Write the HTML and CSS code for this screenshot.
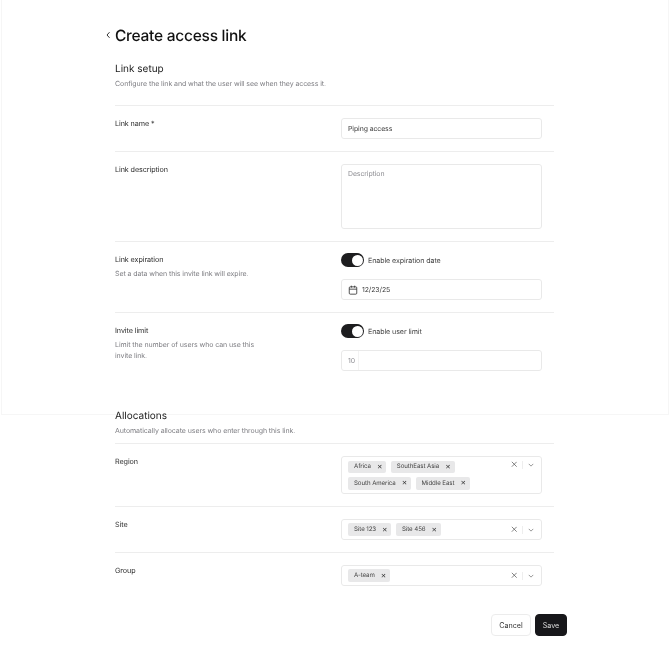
FILE: index.html
```html
<!DOCTYPE html>
<html lang="en">
<head>
<meta charset="utf-8">
<title>Create access link</title>
<link rel="stylesheet" href="styles.css">
</head>
<body>
<div class="frame"></div>
<main class="page">
  <header class="title-row">
    <svg class="back" viewBox="0 0 6 8" width="6" height="8"><path d="M4.5 1.2 2 4l2.5 2.8" fill="none" stroke="#333" stroke-width="1"/></svg>
    <h1>Create access link</h1>
  </header>

  <section class="setup">
    <h2>Link setup</h2>
    <p class="hint">Configure the link and what the user will see when they access it.</p>
    <div class="row">
      <div class="label">Link name *</div>
      <div class="control"><div class="input">Piping access</div></div>
    </div>
    <div class="row">
      <div class="label">Link description</div>
      <div class="control"><div class="input area muted">Description</div></div>
    </div>
    <div class="row">
      <div class="label">Link expiration<p class="hint narrow">Set a data when this invite link will expire.</p></div>
      <div class="control stack">
        <div class="switch-line"><span class="switch"></span><span>Enable expiration date</span></div>
        <div class="input date">
          <svg viewBox="0 0 12 12" width="10" height="10"><rect x="1.5" y="2.2" width="9" height="8.8" rx="1.2" fill="none" stroke="#333"/><path d="M1.5 5h9M4 .8v2.4M8 .8v2.4" fill="none" stroke="#333"/></svg>
          <span>12/23/25</span>
        </div>
      </div>
    </div>
    <div class="row last">
      <div class="label">Invite limit<p class="hint narrow">Limit the number of users who can use this invite link.</p></div>
      <div class="control stack">
        <div class="switch-line"><span class="switch"></span><span>Enable user limit</span></div>
        <div class="input number"><span class="muted num">10</span></div>
      </div>
    </div>
  </section>

  <section class="alloc">
    <h2>Allocations</h2>
    <p class="hint">Automatically allocate users who enter through this link.</p>
    <div class="row">
      <div class="label">Region</div>
      <div class="control">
        <div class="select tall">
          <div class="tags">
            <span class="tag">Africa<i>&#10005;</i></span><span class="tag">SouthEast Asia<i>&#10005;</i></span>
            <span class="tag">South America<i>&#10005;</i></span><span class="tag">Middle East<i>&#10005;</i></span>
          </div>
          <div class="actions">
            <svg class="clear" viewBox="0 0 8 8" width="7" height="7"><path d="M1 1l6 6M7 1 1 7" stroke="#555" fill="none" stroke-width=".9"/></svg>
            <span class="sep"></span>
            <svg class="chev" viewBox="0 0 8 5" width="6" height="4"><path d="M1 1l3 3 3-3" stroke="#666" fill="none" stroke-width=".9"/></svg>
          </div>
        </div>
      </div>
    </div>
    <div class="row">
      <div class="label">Site</div>
      <div class="control">
        <div class="select">
          <div class="tags">
            <span class="tag">Site 123<i>&#10005;</i></span><span class="tag">Site 456<i>&#10005;</i></span>
          </div>
          <div class="actions">
            <svg class="clear" viewBox="0 0 8 8" width="7" height="7"><path d="M1 1l6 6M7 1 1 7" stroke="#555" fill="none" stroke-width=".9"/></svg>
            <span class="sep"></span>
            <svg class="chev" viewBox="0 0 8 5" width="6" height="4"><path d="M1 1l3 3 3-3" stroke="#666" fill="none" stroke-width=".9"/></svg>
          </div>
        </div>
      </div>
    </div>
    <div class="row">
      <div class="label">Group</div>
      <div class="control">
        <div class="select">
          <div class="tags">
            <span class="tag">A-team<i>&#10005;</i></span>
          </div>
          <div class="actions">
            <svg class="clear" viewBox="0 0 8 8" width="7" height="7"><path d="M1 1l6 6M7 1 1 7" stroke="#555" fill="none" stroke-width=".9"/></svg>
            <span class="sep"></span>
            <svg class="chev" viewBox="0 0 8 5" width="6" height="4"><path d="M1 1l3 3 3-3" stroke="#666" fill="none" stroke-width=".9"/></svg>
          </div>
        </div>
      </div>
    </div>
  </section>

  <footer class="buttons">
    <button class="btn">Cancel</button>
    <button class="btn primary">Save</button>
  </footer>
</main>
</body>
</html>
```

FILE: styles.css
```css
* { box-sizing: border-box; }
html, body { margin: 0; background: #fff; }
body {
  font-family: Inter, "Liberation Sans", sans-serif;
  text-rendering: geometricPrecision;
  letter-spacing: -.08px;
  color: #2b2b2b;
  font-size: 8px;
  height: 648px;
  overflow: hidden;
  position: relative;
}
.frame {
  position: absolute;
  left: 1px;
  top: -2px;
  width: 668px;
  height: 417px;
  border: 1px solid #f6f6f6;
}
.page {
  position: relative;
  width: 452px;
  margin-left: 115px;
  padding-top: 25px;
  will-change: transform;
}
.title-row { display: flex; align-items: center; margin-left: -10px; gap: 4px; height: 20px; width: 439px; }
.back { flex: none; }
h1 { margin: 2px 0 0; font-size: 15.5px; line-height: 20px; font-weight: 500; color: #111; letter-spacing: -.25px; }
h2 { margin: 0; font-size: 10px; line-height: 14px; font-weight: 400; color: #1c1c1c; letter-spacing: 0; }
.hint { margin: 0; font-size: 7px; line-height: 10.5px; color: #7d7d82; }
.setup { width: 439px; margin-top: 17px; }
.setup > h2 { margin-bottom: 2.5px; }
.setup > .hint { padding-bottom: 16px; }
.row {
  display: grid;
  grid-template-columns: 226px 200.6px;
  border-top: 1px solid #ededed;
  padding: 12px 0;
}
.row.last { padding-bottom: 0; }
.label { font-size: 7.2px; line-height: 11px; color: #2e2e2e; }
.narrow { width: 140px; margin-top: 4px; }
.input {
  height: 21px;
  border: 1px solid #e9e9e9;
  border-radius: 3px;
  padding: 0 6px;
  display: flex;
  align-items: center;
  font-size: 6.9px;
  color: #3a3a3a;
}
.area { height: 65px; align-items: flex-start; padding-top: 4px; }
.muted { color: #8d8d92; }
.stack { display: flex; flex-direction: column; gap: 12px; }
.switch-line { display: flex; align-items: center; gap: 4px; height: 14px; font-size: 7.1px; color: #444; margin-top: -1px; }
.switch {
  position: relative;
  width: 23px;
  height: 14px;
  border-radius: 7px;
  background: #1d1d1f;
  flex: none;
}
.switch::after {
  content: "";
  position: absolute;
  right: 1.5px;
  top: 1.5px;
  width: 11px;
  height: 11px;
  border-radius: 50%;
  background: #fff;
}
.date { gap: 4px; }
.number { padding: 0; }
.num { width: 17px; height: 100%; display: flex; align-items: center; padding-left: 6px; border-right: 1px solid #f3f3f3; }
.alloc { width: 439px; margin-top: 38px; }
.alloc > h2 { margin-bottom: 2.5px; line-height: 14px; }
.alloc > .hint { padding-bottom: 7px; }
.select {
  min-height: 21px;
  height: 21px;
  border: 1px solid #e9e9e9;
  border-radius: 3px;
  display: flex;
  align-items: center;
  padding: 0 6.5px 0 6px;
  justify-content: space-between;
}
.select.tall { height: 38px; align-items: flex-start; padding-top: 3.5px; }
.tall .actions { margin-top: -2px; }
.tags { display: flex; flex-wrap: wrap; gap: 4px 4.5px; width: 142px; }
.tag {
  display: inline-flex;
  align-items: center;
  height: 12.5px;
  background: #e8e8e9;
  border-radius: 2px;
  padding: 0 4px 0 6px;
  font-size: 6.15px;
  color: #444;
  white-space: nowrap;
}
.tag i { font-style: normal; font-size: 6.5px; margin-left: 6px; color: #333; }
.actions { display: flex; align-items: center; gap: 5px; height: 12px; }
.clear { width: 6.5px; height: 6.5px; }
.sep { width: 1px; height: 8px; background: #eee; }
.buttons { display: flex; justify-content: flex-end; gap: 4px; margin-top: 16px; }
.btn {
  height: 22px;
  border: 1px solid #ececec;
  background: #fff;
  border-radius: 4px;
  padding: 0 4px;
  width: 40px;
  font: 7.2px Inter, "Liberation Sans", sans-serif;
  color: #333;
}
.primary { width: 32px; background: #17171a; border-color: #17171a; color: #ddd; }
```
